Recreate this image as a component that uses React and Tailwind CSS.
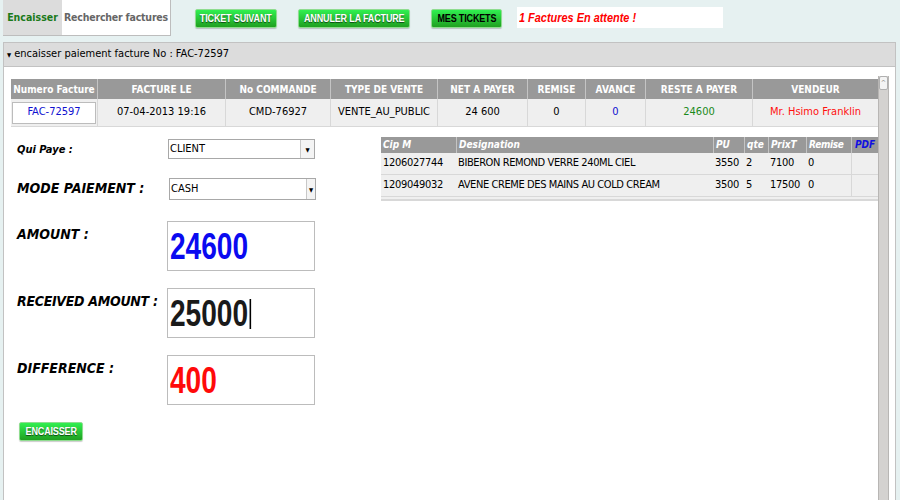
import React from 'react'

const font = { fontFamily: '"DejaVu Sans Condensed", "DejaVu Sans", Tahoma, sans-serif' }
const arial = { fontFamily: '"Liberation Sans", Arial, sans-serif' }

const cols = [
  { label: 'Numero Facture', w: 'w-[86px]' },
  { label: 'FACTURE LE', w: 'w-[128px]' },
  { label: 'No COMMANDE', w: 'w-[105px]' },
  { label: 'TYPE DE VENTE', w: 'w-[107px]' },
  { label: 'NET A PAYER', w: 'w-[90px]' },
  { label: 'REMISE', w: 'w-[58px]' },
  { label: 'AVANCE', w: 'w-[60px]' },
  { label: 'RESTE A PAYER', w: 'w-[107px]' },
  { label: 'VENDEUR', w: 'flex-1' },
]

const items = [
  ['1206027744', 'BIBERON REMOND VERRE 240ML CIEL', '3550', '2', '7100', '0'],
  ['1209049032', 'AVENE CREME DES MAINS AU COLD CREAM', '3500', '5', '17500', '0'],
]

function GreenButton({ children, dark, w }) {
  return (
    <button
      className={`${w} h-[19px] rounded-[2px] border border-[#8fdc8f] bg-gradient-to-b from-[#30f050] to-[#20a020] flex items-center justify-center shadow-[0_1px_1px_rgba(0,0,0,0.2)] ${dark ? 'text-black' : 'text-white [text-shadow:0_1px_1px_rgba(0,0,0,0.6)]'}`}
      style={arial}
    >
      <span className="inline-block whitespace-nowrap text-[11px] font-bold leading-none scale-x-[0.82] tracking-[-0.2px]">{children}</span>
    </button>
  )
}

function Select({ value, h, arrowBox }) {
  return (
    <div className={`w-[147px] ${h} border border-[#a8a8a8] bg-white flex items-center text-[11px] text-black`}>
      <span className="flex-1 pl-[1px]">{value}</span>
      <span className={`${arrowBox} h-full border-l border-[#c8c8c8] bg-[#f4f4f4] flex items-center justify-center text-[6px]`}>▼</span>
    </div>
  )
}

function BigField({ children, color, caret }) {
  return (
    <div className="w-[148px] h-[50px] border border-[#bcbcbc] bg-white flex items-center pl-[2px] pt-[2px]">
      <span className={`inline-flex items-center origin-left scale-x-[0.78] text-[36px] font-bold leading-none ${color}`} style={arial}>
        {children}
        {caret && <span className="inline-block w-[2px] h-[30px] bg-black ml-[2px]" />}
      </span>
    </div>
  )
}

export default function App() {
  return (
    <div className="w-[900px] h-[500px] overflow-hidden bg-[#e6f1f1] relative" style={font}>
      {/* top bar */}
      <div className="flex items-start h-[42px]">
        <div className="ml-[3px] flex h-[36px] border-b border-r border-[#bdbdbd]">
          <div className="w-[59px] bg-[#dcdcdc] flex items-center justify-center text-[10.5px] font-bold text-[#1a7a1a] whitespace-nowrap">Encaisser</div>
          <div className="w-[108px] bg-white flex items-center justify-center text-[10.5px] font-bold text-[#666] whitespace-nowrap tracking-[-0.2px]">Rechercher factures</div>
        </div>
        <div className="ml-[24px] mt-[9px] flex items-center gap-[21px]">
          <GreenButton w="w-[82px]">TICKET SUIVANT</GreenButton>
          <GreenButton w="w-[112px]">ANNULER LA FACTURE</GreenButton>
          <GreenButton w="w-[71px]" dark>MES TICKETS</GreenButton>
        </div>
        <div className="ml-[15px] mt-[7px] w-[206px] h-[21px] bg-white flex items-center pl-[2px] text-[#ff0000]" style={arial}>
          <span className="inline-block origin-left scale-x-[0.84] whitespace-nowrap text-[13px] font-bold italic">1 Factures En attente !</span>
        </div>
      </div>

      {/* panel */}
      <div className="ml-[3px] mr-[4px] border border-[#c2c2c2] h-[470px] bg-white">
        <div className="h-[24px] bg-[#dcdcdc] border-b border-[#c2c2c2] flex items-center pl-[3px] text-[11px] text-black">
          <span className="text-[6px] mr-[3px]">▼</span>encaisser paiement facture No : FAC-72597
        </div>

        <div className="flex">
          <div className="flex-1 pl-[7px] pt-[12px]">
            {/* invoice table */}
            <div className="w-[867px] border-b border-[#d8d8d8]">
              <div className="flex h-[20px] bg-[#999999]">
                {cols.map((c, i) => (
                  <div key={c.label} className={`${c.w} flex items-center justify-center text-[10px] font-bold text-white whitespace-nowrap ${i ? 'border-l border-[#c4c4c4]' : ''}`}>{c.label}</div>
                ))}
              </div>
              <div className="flex h-[27px] bg-[#efefef] text-[11px] text-black">
                <div className="w-[86px] flex items-center px-[1px]">
                  <div className="w-full h-[22px] bg-white border border-[#bcbcbc] flex items-center justify-center text-[#1010d0]">FAC-72597</div>
                </div>
                <div className="w-[128px] flex items-center justify-center border-l border-[#d8d8d8]">07-04-2013 19:16</div>
                <div className="w-[105px] flex items-center justify-center border-l border-[#d8d8d8]">CMD-76927</div>
                <div className="w-[107px] flex items-center justify-center border-l border-[#d8d8d8]">VENTE_AU_PUBLIC</div>
                <div className="w-[90px] flex items-center justify-center border-l border-[#d8d8d8]">24 600</div>
                <div className="w-[58px] flex items-center justify-center border-l border-[#d8d8d8]">0</div>
                <div className="w-[60px] flex items-center justify-center border-l border-[#d8d8d8] text-[#1010d0]">0</div>
                <div className="w-[107px] flex items-center justify-center border-l border-[#d8d8d8] text-[#1a8a1a]">24600</div>
                <div className="flex-1 flex items-center justify-center border-l border-[#d8d8d8] text-[#ff1010]">Mr. Hsimo Franklin</div>
              </div>
            </div>

            <div className="flex">
              {/* form */}
              <div className="w-[370px] pl-[6px]">
                <div className="flex items-start mt-[12px] h-[22px]">
                  <div className="w-[151px] text-[11px] font-bold italic pt-[3px]">Qui Paye :</div>
                  <Select value="CLIENT" h="h-[20px]" arrowBox="w-[14px]" />
                </div>
                <div className="flex items-start mt-[17px] h-[22px]">
                  <div className="w-[152px] text-[14px] font-bold italic">MODE PAIEMENT :</div>
                  <Select value="CASH" h="h-[22px]" arrowBox="w-[9px]" />
                </div>
                <div className="flex items-start mt-[21px]">
                  <div className="w-[150px] text-[14px] font-bold italic pt-[3px]">AMOUNT :</div>
                  <BigField color="text-[#0a0af0]">24600</BigField>
                </div>
                <div className="flex items-start mt-[17px]">
                  <div className="w-[150px] text-[14px] font-bold italic pt-[3px] whitespace-nowrap tracking-[-0.3px]">RECEIVED AMOUNT :</div>
                  <BigField color="text-[#1a1a1a]" caret>25000</BigField>
                </div>
                <div className="flex items-start mt-[17px]">
                  <div className="w-[150px] text-[14px] font-bold italic pt-[3px]">DIFFERENCE :</div>
                  <BigField color="text-[#ff0a0a]">400</BigField>
                </div>
                <div className="mt-[17px] ml-[2px]">
                  <GreenButton w="w-[64px]">ENCAISSER</GreenButton>
                </div>
              </div>

              {/* items table */}
              <div className="mt-[10px] w-[497px] h-[64px] border-b-2 border-[#d8d8d8] bg-[#efefef]">
                <div className="flex h-[16px] bg-[#999999] text-[10px] font-bold italic text-white">
                  <div className="w-[75px] pl-[2px]">Cip M</div>
                  <div className="w-[257px] pl-[2px] border-l border-[#c4c4c4]">Designation</div>
                  <div className="w-[31px] pl-[2px] border-l border-[#c4c4c4]">PU</div>
                  <div className="w-[24px] pl-[2px] border-l border-[#c4c4c4]">qte</div>
                  <div className="w-[38px] pl-[2px] border-l border-[#c4c4c4]">PrixT</div>
                  <div className="w-[45px] pl-[2px] border-l border-[#c4c4c4] tracking-[-0.3px]">Remise</div>
                  <div className="flex-1 pl-[3px] border-l border-[#c4c4c4] text-[#1010e0]">PDF</div>
                </div>
                {items.map((r) => (
                  <div key={r[0]} className="flex h-[22px] text-[11px] text-black border-b border-[#d8d8d8] whitespace-nowrap">
                    <div className="w-[75px] pl-[2px] flex items-center tracking-[-0.3px]">{r[0]}</div>
                    <div className="w-[257px] pl-[2px] flex items-center tracking-[-0.4px]">{r[1]}</div>
                    <div className="w-[31px] pl-[2px] flex items-center tracking-[-0.3px]">{r[2]}</div>
                    <div className="w-[24px] pl-[2px] flex items-center">{r[3]}</div>
                    <div className="w-[38px] pl-[2px] flex items-center tracking-[-0.3px]">{r[4]}</div>
                    <div className="w-[45px] pl-[2px] flex items-center">{r[5]}</div>
                    <div className="flex-1 border-l border-[#d8d8d8]" />
                  </div>
                ))}
              </div>
            </div>
          </div>

          {/* scrollbar */}
          <div className="w-[12px] mt-[9px] mr-[6px] h-[440px] bg-[#d4d2d0] border-x border-[#b8b6b4] flex flex-col">
            <div className="h-[14px] bg-[#f4f4f4] border border-[#b0b0b0] rounded-[2px] flex items-center justify-center text-[7px] text-[#888]">^</div>
          </div>
        </div>
      </div>
    </div>
  )
}
